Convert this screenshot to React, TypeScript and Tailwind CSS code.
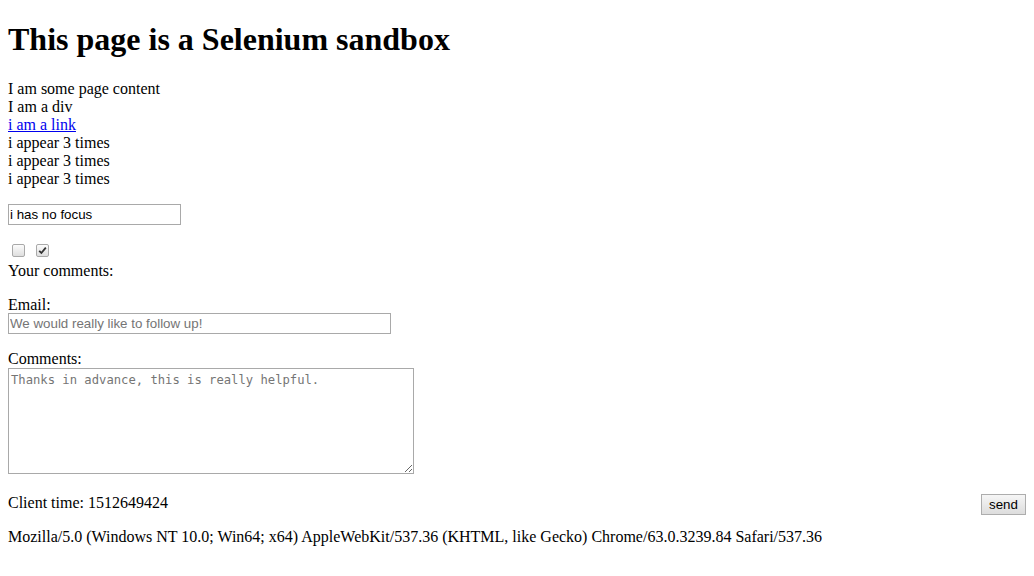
import React from "react";

const serif = "font-['Times_New_Roman','Liberation_Serif',serif]";
const sans = "font-['Arial','Liberation_Sans',sans-serif]";

const CheckBox = ({ checked }: { checked?: boolean }) => (
  <span className="flex h-[13px] w-[13px] items-center justify-center rounded-[2px] border border-[#a9a9a9] bg-gradient-to-b from-[#fcfcfc] to-[#dedede]">
    {checked && (
      <svg width="9" height="9" viewBox="0 0 9 9">
        <path d="M1.2 4.8 L3.4 7 L7.8 1.6" stroke="#333" strokeWidth="1.8" fill="none" />
      </svg>
    )}
  </span>
);

const App: React.FC = () => {
  return (
    <div className={`${serif} min-h-screen bg-white px-[8px] pt-[21px] text-[16px] text-black`}>
      <h1 className="h-[37px] text-[32px] font-bold leading-[37px]">This page is a Selenium sandbox</h1>

      <div className="mt-[22px] leading-[18px]">
        <p>I am some page content</p>
        <div>I am a div</div>
        <a href="#" className="text-[#0000ee] underline">
          i am a link
        </a>
        <div>i appear 3 times</div>
        <div>i appear 3 times</div>
        <div>i appear 3 times</div>
      </div>

      <input
        type="text"
        defaultValue="i has no focus"
        className={`${sans} mt-[16px] block h-[21px] w-[173px] border border-[#a9a9a9] px-[1px] text-[13.33px] text-black outline-none`}
      />

      <div className="mt-[16px] flex h-[21px] items-center gap-[11px] pb-[2px] pl-[4px]">
        <CheckBox />
        <CheckBox checked />
      </div>

      <div className="leading-[18px]">Your comments:</div>

      <div className="mt-[16px] leading-[18px]">Email:</div>
      <input
        type="text"
        placeholder="We would really like to follow up!"
        className={`${sans} -mt-[1px] block h-[21px] w-[383px] border border-[#a9a9a9] px-[1px] text-[13.33px] text-black outline-none placeholder:text-[#757575]`}
      />

      <div className="mt-[16px] leading-[18px]">Comments:</div>
      <textarea
        placeholder="Thanks in advance, this is really helpful."
        className="block h-[106px] w-[406px] border border-[#a9a9a9] px-[2px] py-[2px] font-['Consolas','DejaVu_Sans_Mono',monospace] text-[12.2px] outline-none placeholder:text-[#757575]"
      />

      <div className="mt-[20px] flex items-start justify-between">
        <span className="leading-[18px]">Client time: 1512649424</span>
        <button
          className={`${sans} h-[21px] w-[45px] border border-[#adadad] bg-gradient-to-b from-[#f6f6f6] to-[#dddddd] text-[13.33px] leading-none text-black`}
        >
          send
        </button>
      </div>

      <p className="mt-[13px] leading-[18px]">
        Mozilla/5.0 (Windows NT 10.0; Win64; x64) AppleWebKit/537.36 (KHTML, like Gecko) Chrome/63.0.3239.84 Safari/537.36
      </p>
    </div>
  );
};

export default App;
